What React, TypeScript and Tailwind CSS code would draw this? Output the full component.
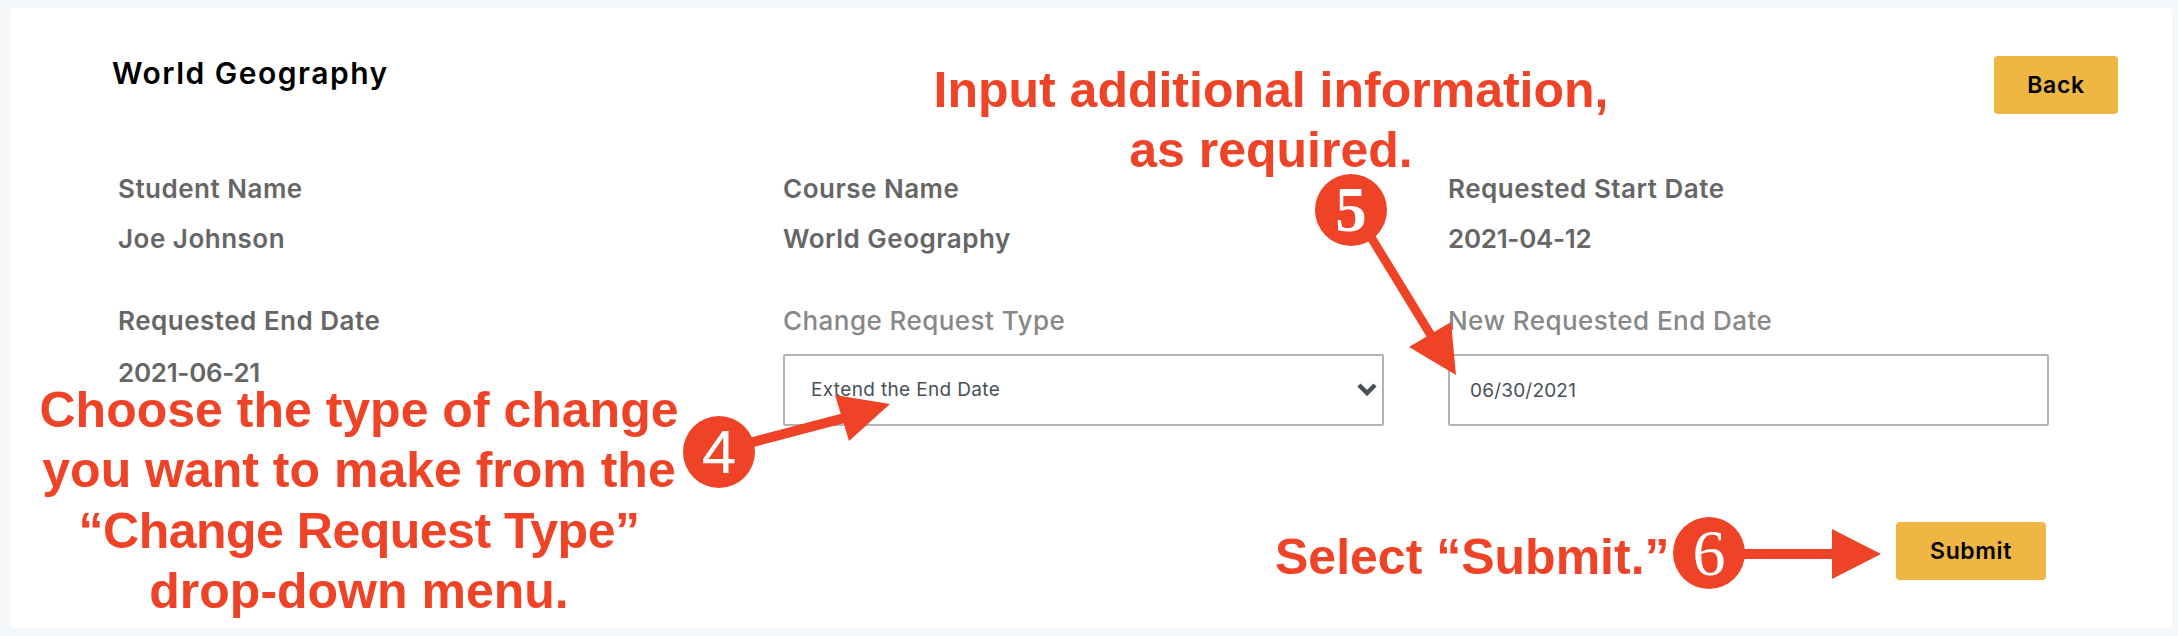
import React from "react";

const ui = "font-['Inter','Liberation_Sans',sans-serif]";
const callout = "absolute font-['Liberation_Sans',Arial,sans-serif] font-bold text-[#ee4327] text-center text-[50px] leading-[60.4px]";
const badge = "absolute flex h-[72px] w-[72px] items-center justify-center rounded-full bg-[#ee4327] text-white leading-none";
const value = "h-8 text-[26px] leading-8 font-semibold tracking-[0.5px] text-[#666666] whitespace-nowrap";
const date = "h-8 text-[26px] leading-8 font-semibold tracking-[-0.3px] text-[#666666] whitespace-nowrap";
const label = "block h-8 text-[26px] leading-8 font-medium tracking-[0.45px] text-[#888888] whitespace-nowrap";

function Field({ name, text, isDate }: { name: string; text: string; isDate?: boolean }) {
  return (
    <div>
      <div className={value}>{name}</div>
      <div className={`mt-[18px] ${isDate ? date : value}`}>{text}</div>
    </div>
  );
}

export default function App() {
  return (
    <div className={`relative h-[636px] w-[2178px] overflow-hidden bg-[#f4f7fa] pt-2 pr-[6px] pb-2 pl-[10px] ${ui}`}>
      <div className="flex h-full flex-col rounded bg-white pt-12">
        <div className="flex items-start justify-between pr-[54px] pl-[102px]">
          <h1 className="text-[30px] leading-[34px] font-semibold tracking-[1.5px] text-black">World Geography</h1>
          <button className="h-[58px] w-[124px] rounded bg-[#efb644] text-[23px] font-semibold tracking-[0.6px] text-black">Back</button>
        </div>
        <div className="mt-[59px] grid grid-cols-[665px_665px_601px] gap-y-[50px] pl-[108px]">
          <Field name="Student Name" text="Joe Johnson" />
          <Field name="Course Name" text="World Geography" />
          <Field name="Requested Start Date" text="2021-04-12" isDate />
          <div>
            <div className={value}>Requested End Date</div>
            <div className={`mt-[20px] ${date}`}>2021-06-21</div>
          </div>
          <div>
            <label className={label}>Change Request Type</label>
            <div className="relative mt-[17px] h-[72px] w-[601px]">
              <select
                defaultValue="extend"
                className="h-full w-full appearance-none rounded-[2px] border-2 border-[#b3b3b3] bg-white pl-[26px] text-[19px] tracking-[0.35px] text-[#495057]"
              >
                <option value="extend">Extend the End Date</option>
              </select>
              <svg className="pointer-events-none absolute top-[28px] right-[7px]" width="20" height="16" viewBox="0 0 20 16" fill="none">
                <path d="M2 3l8 8 8-8" stroke="#495057" strokeWidth="4.5" />
              </svg>
            </div>
          </div>
          <div>
            <label className={label}>New Requested End Date</label>
            <input
              readOnly
              value="06/30/2021"
              className="mt-[17px] block h-[72px] w-[601px] rounded-[2px] border-2 border-[#b3b3b3] bg-white pl-[20px] text-[19px] tracking-[0.2px] text-[#495057]"
            />
          </div>
        </div>
        <div className="mt-[96px] flex justify-end pr-[126px]">
          <button className="h-[58px] w-[150px] rounded bg-[#efb644] text-[23px] font-semibold tracking-[0.6px] text-black">Submit</button>
        </div>
      </div>

      <div className={`${callout} top-[60px] left-[871px] w-[800px]`}>
        Input additional information,
        <br />
        as required.
      </div>
      <div className={`${callout} top-[380px] left-[9px] w-[700px]`}>
        Choose the type of change
        <br />
        you want to make from the
        <br />
        <span className="tracking-[-0.5px]">“Change Request Type”</span>
        <br />
        drop-down menu.
      </div>
      <div className={`${callout} top-[527px] left-[1275px] whitespace-nowrap`}>Select “Submit.”</div>

      <svg className="pointer-events-none absolute inset-0" width="2178" height="636" viewBox="0 0 2178 636">
        <path d="M740 445.5L850 416.5" stroke="#ee4327" strokeWidth="10" />
        <path d="M835 395L890 404L849 441Z" fill="#ee4327" />
        <path d="M1366 229L1432 337" stroke="#ee4327" strokeWidth="9" />
        <path d="M1451 322L1409 347L1456 375Z" fill="#ee4327" />
        <path d="M1735 554H1835" stroke="#ee4327" strokeWidth="10" />
        <path d="M1832 529L1881 554L1832 579Z" fill="#ee4327" />
      </svg>
      <div className={`${badge} top-[416px] left-[683px] font-['Liberation_Sans',Arial,sans-serif] text-[62px]`}>4</div>
      <div className={`${badge} top-[174px] left-[1315px] font-['Liberation_Serif',serif] font-bold text-[63px]`}>5</div>
      <div className={`${badge} top-[517px] left-[1673px] font-['Liberation_Serif',serif] text-[66px]`}>6</div>
    </div>
  );
}
